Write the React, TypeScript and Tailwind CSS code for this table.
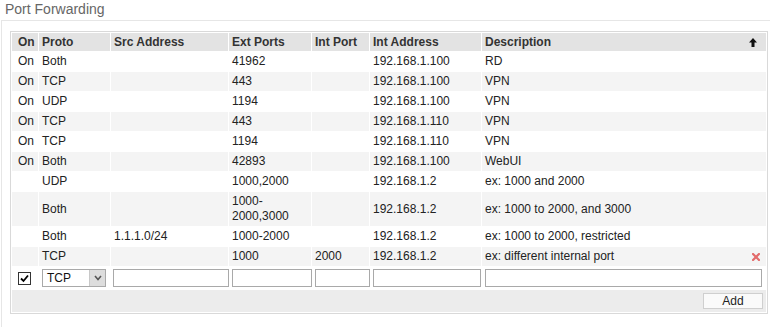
import { Fragment } from "react";

type Rule = {
  on: boolean;
  proto: string;
  src: string;
  ext: string;
  intPort: string;
  intAddr: string;
  desc: string;
  removable?: boolean;
};

const rules: Rule[] = [
  { on: true, proto: "Both", src: "", ext: "41962", intPort: "", intAddr: "192.168.1.100", desc: "RD" },
  { on: true, proto: "TCP", src: "", ext: "443", intPort: "", intAddr: "192.168.1.100", desc: "VPN" },
  { on: true, proto: "UDP", src: "", ext: "1194", intPort: "", intAddr: "192.168.1.100", desc: "VPN" },
  { on: true, proto: "TCP", src: "", ext: "443", intPort: "", intAddr: "192.168.1.110", desc: "VPN" },
  { on: true, proto: "TCP", src: "", ext: "1194", intPort: "", intAddr: "192.168.1.110", desc: "VPN" },
  { on: true, proto: "Both", src: "", ext: "42893", intPort: "", intAddr: "192.168.1.100", desc: "WebUI" },
  { on: false, proto: "UDP", src: "", ext: "1000,2000", intPort: "", intAddr: "192.168.1.2", desc: "ex: 1000 and 2000" },
  { on: false, proto: "Both", src: "", ext: "1000-|2000,3000", intPort: "", intAddr: "192.168.1.2", desc: "ex: 1000 to 2000, and 3000" },
  { on: false, proto: "Both", src: "1.1.1.0/24", ext: "1000-2000", intPort: "", intAddr: "192.168.1.2", desc: "ex: 1000 to 2000, restricted" },
  {
    on: false,
    proto: "TCP",
    src: "",
    ext: "1000",
    intPort: "2000",
    intAddr: "192.168.1.2",
    desc: "ex: different internal port",
    removable: true,
  },
];

function SortUpIcon() {
  return (
    <svg width="8" height="9" viewBox="0 0 8 9" className="block">
      <path d="M4 0 L8 4.5 L5.5 4.5 L5.5 9 L2.5 9 L2.5 4.5 L0 4.5 Z" fill="#111" />
    </svg>
  );
}

function RemoveIcon() {
  return (
    <svg width="8" height="8" viewBox="0 0 8 8" className="block">
      <path d="M1 1 L7 7 M7 1 L1 7" stroke="#e36b6b" strokeWidth="2.2" strokeLinecap="square" />
    </svg>
  );
}

function CheckBox() {
  return (
    <div className="flex h-[13px] w-[13px] items-center justify-center border border-[#333] bg-white">
      <svg width="9" height="9" viewBox="0 0 9 9" className="block">
        <path d="M1 4.5 L3.5 7 L8 1.5" stroke="#000" strokeWidth="1.8" fill="none" />
      </svg>
    </div>
  );
}

function ProtoSelect() {
  return (
    <div className="flex h-[18px] w-[64px] items-stretch border border-[#a9a9a9] bg-white">
      <span className="flex-1 pl-[4px] text-[12px] leading-[16px] text-[#111]">TCP</span>
      <span className="flex w-[16px] items-center justify-center border-l border-[#c8c8c8] bg-[#dddddd]">
        <svg width="8" height="6" viewBox="0 0 8 6" className="block">
          <path d="M1 1 L4 4.5 L7 1" stroke="#555" strokeWidth="1.6" fill="none" />
        </svg>
      </span>
    </div>
  );
}

function TextBox({ width }: { width: string }) {
  return <div className={`h-[18px] border border-[#a9a9a9] bg-white ${width}`} />;
}

export default function App() {
  const th = "h-[18px] pl-[3px] text-left align-middle text-[12px] font-bold leading-[14px] text-[#333] bg-[#e3e3e3]";
  const td = "pl-[3px] py-[2px] align-middle text-[12px] leading-[15px] text-[#222]";

  return (
    <div className="h-[327px] w-[770px] overflow-hidden bg-white font-['Liberation_Sans',Arial,sans-serif]">
      <h2 className="h-[20px] pl-[5px] text-[14px] leading-[18px] text-[#666]">Port Forwarding</h2>

      <div className="ml-px h-[307px] border-l border-t border-[#e6e6e6] pl-[8px] pt-[10px]">
        <table className="w-[758px] table-fixed border-separate border-spacing-[1px] border border-[#d9d9d9] bg-white">
          <thead>
            <tr>
              <th className={`${th} w-[26px] pl-[6px]`}>On</th>
              <th className={`${th} w-[71px]`}>Proto</th>
              <th className={`${th} w-[117px]`}>Src Address</th>
              <th className={`${th} w-[82px]`}>Ext Ports</th>
              <th className={`${th} w-[57px]`}>Int Port</th>
              <th className={`${th} w-[111px]`}>Int Address</th>
              <th className={`${th} w-[284px]`}>
                <div className="flex items-center justify-between pr-[9px]">
                  <span>Description</span>
                  <SortUpIcon />
                </div>
              </th>
            </tr>
          </thead>
          <tbody>
            {rules.map((rule, i) => {
              const bg = i % 2 === 1 ? "bg-[#f4f4f4]" : "bg-white";
              return (
                <tr key={i}>
                  <td className={`${td} ${bg} pl-[6px]`}>{rule.on ? "On" : ""}</td>
                  <td className={`${td} ${bg}`}>{rule.proto}</td>
                  <td className={`${td} ${bg}`}>{rule.src}</td>
                  <td className={`${td} ${bg}`}>
                    {rule.ext.split("|").map((part, j) => (
                      <Fragment key={j}>
                        {j > 0 ? <br /> : null}
                        {part}
                      </Fragment>
                    ))}
                  </td>
                  <td className={`${td} ${bg}`}>{rule.intPort}</td>
                  <td className={`${td} ${bg}`}>{rule.intAddr}</td>
                  <td className={`${td} ${bg}`}>
                    <div className="flex items-center justify-between pr-[6px]">
                      <span>{rule.desc}</span>
                      {rule.removable ? <RemoveIcon /> : null}
                    </div>
                  </td>
                </tr>
              );
            })}

            <tr>
              <td className="bg-white py-[2px] pl-[6px] align-middle">
                <CheckBox />
              </td>
              <td className="bg-white py-[2px] pl-[3px] align-middle">
                <ProtoSelect />
              </td>
              <td className="bg-white py-[2px] pl-[2px] align-middle">
                <TextBox width="w-[116px]" />
              </td>
              <td className="bg-white py-[2px] pl-[3px] align-middle">
                <TextBox width="w-[80px]" />
              </td>
              <td className="bg-white py-[2px] pl-[3px] align-middle">
                <TextBox width="w-[55px]" />
              </td>
              <td className="bg-white py-[2px] pl-[3px] align-middle">
                <TextBox width="w-[108px]" />
              </td>
              <td className="bg-white py-[2px] pl-[3px] align-middle">
                <TextBox width="w-[277px]" />
              </td>
            </tr>

            <tr>
              <td colSpan={7} className="bg-[#ececec] py-[3px] pr-[3px]">
                <div className="flex justify-end">
                  <button
                    type="button"
                    className="h-[16px] w-[60px] border border-[#cfcfcf] bg-[#fafafa] text-center text-[12px] leading-[14px] text-[#222]"
                  >
                    Add
                  </button>
                </div>
              </td>
            </tr>
          </tbody>
        </table>
      </div>
    </div>
  );
}
